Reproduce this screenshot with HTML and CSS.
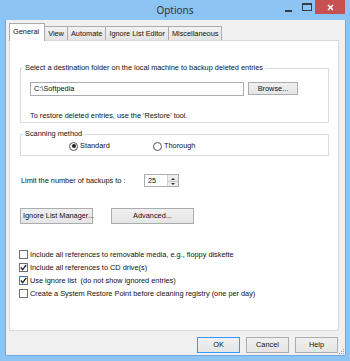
FILE: index.html
```html
<!DOCTYPE html>
<html lang="en">
<head>
  <meta charset="UTF-8" />
  <title>Options</title>
  <link rel="stylesheet" href="styles.css">
</head>
<body>

  <div class="window">
    <div class="titlebar">
      <span class="title">Options</span>
      <div class="controls">
        <span class="ctl-min"></span>
        <span class="ctl-max"></span>
        <span class="ctl-close">
          <svg width="7" height="7" viewBox="0 0 7 7"><path d="M1 1 L6 6 M6 1 L1 6" stroke="#fff" stroke-width="1.5"/></svg>
        </span>
      </div>
    </div>

    <div class="client">
      <div class="tabs">
        <div class="tab active">General</div>
        <div class="tab">View</div>
        <div class="tab">Automate</div>
        <div class="tab">Ignore List Editor</div>
        <div class="tab">Miscellaneous</div>
      </div>

      <div class="panel">
        <fieldset class="group group-folder">
          <legend>Select a destination folder on the local machine to backup deleted entries</legend>
          <div class="folder-row">
            <div class="textbox">C:\Softpedia</div>
            <div class="btn btn-browse">Browse...</div>
          </div>
          <p class="note">To restore deleted entries, use the 'Restore' tool.</p>
        </fieldset>

        <fieldset class="group group-scan">
          <legend>Scanning method</legend>
          <div class="radio-row">
            <label class="radio"><span class="dot checked"></span>Standard</label>
            <label class="radio"><span class="dot"></span>Thorough</label>
          </div>
        </fieldset>

        <div class="limit-row">
          <span class="limit-label">Limit the number of backups to :</span>
          <div class="spinner">
            <span class="spin-value">25</span>
            <span class="spin-arrows">
              <svg width="10" height="13" viewBox="0 0 10 13">
                <path d="M3 5 L5 3 L7 5 Z M3 8 L5 10 L7 8 Z" fill="#333"/>
                <line x1="0" y1="6.5" x2="10" y2="6.5" stroke="#c8c8c8"/>
              </svg>
            </span>
          </div>
        </div>

        <div class="action-row">
          <div class="btn btn-manager">Ignore List Manager...</div>
          <div class="btn btn-advanced">Advanced...</div>
        </div>

        <ul class="checks">
          <li><span class="box"></span>Include all references to removable media, e.g., floppy diskette</li>
          <li><span class="box checked"><svg width="9" height="9" viewBox="0 0 9 9"><path d="M1.8 4.4 L3.6 6.6 L7.2 2" fill="none" stroke="#222" stroke-width="1.3"/></svg></span>Include all references to CD drive(s)</li>
          <li><span class="box checked focus"><svg width="9" height="9" viewBox="0 0 9 9"><path d="M1.8 4.4 L3.6 6.6 L7.2 2" fill="none" stroke="#222" stroke-width="1.3"/></svg></span>Use ignore list&nbsp; (do not show ignored entries)</li>
          <li><span class="box"></span>Create a System Restore Point before cleaning registry (one per day)</li>
        </ul>
      </div>

      <div class="footer">
        <div class="btn btn-ok">OK</div>
        <div class="btn">Cancel</div>
        <div class="btn">Help</div>
        <svg class="grip" width="6" height="6" viewBox="0 0 6 6">
          <rect x="4" y="0" width="1" height="1" fill="#a0a0a0"/>
          <rect x="2" y="2" width="1" height="1" fill="#a0a0a0"/>
          <rect x="4" y="2" width="1" height="1" fill="#a0a0a0"/>
          <rect x="0" y="4" width="1" height="1" fill="#a0a0a0"/>
          <rect x="2" y="4" width="1" height="1" fill="#a0a0a0"/>
          <rect x="4" y="4" width="1" height="1" fill="#a0a0a0"/>
        </svg>
      </div>
    </div>
  </div>

</body>
</html>
```

FILE: styles.css
```css
body {
  margin: 0;
  padding: 0;
  font-family: 'Liberation Sans', Arial, sans-serif;
  font-size: 7.35px;
  line-height: 10px;
  color: #111;
  background: #8cc4f4;
}

.window {
  width: 350px;
  height: 361px;
  background: #8cc4f4;
}

/* title bar */
.titlebar {
  height: 20px;
  display: grid;
  grid-template-columns: 1fr auto 1fr;
  align-items: center;
}

.title {
  grid-column: 2;
  font-family: 'Noto Sans', 'Open Sans', sans-serif;
  font-size: 10px;
  color: #333;
}

.controls {
  grid-column: 3;
  justify-self: end;
  align-self: start;
  display: flex;
  align-items: flex-start;
  padding-right: 5px;
}

.ctl-min {
  width: 7px;
  height: 2px;
  margin-top: 10px;
  background: #3a3a3a;
}

.ctl-max {
  width: 10px;
  height: 8px;
  margin: 3px 0 0 10px;
  box-sizing: border-box;
  border: 1px solid #3a3a3a;
  border-top-width: 2px;
}

.ctl-close {
  width: 30px;
  height: 14px;
  margin-left: 3px;
  background: #c75050;
  display: flex;
  align-items: center;
  justify-content: center;
}

/* client area */
.client {
  margin: 0 5px 0 6px;
  height: 335px;
  background: #f0f0f0;
  box-shadow: -1px 0 0 #6fa9e0, 1px 0 0 #6fa9e0, 0 1px 0 #6fa9e0;
}

.tabs {
  display: flex;
  align-items: flex-end;
  padding: 3px 0 0 3px;
  height: 17px;
}

.tab {
  height: 14px;
  padding: 0 3px;
  box-sizing: border-box;
  border: 1px solid #acacac;
  border-bottom: none;
  margin-left: -1px;
  background: linear-gradient(#f2f2f2, #e3e3e3);
  line-height: 13px;
  white-space: nowrap;
}

.tab.active {
  height: 18px;
  margin: 0 0 -1px 0;
  padding: 1px 5px 0 3px;
  background: #fff;
  position: relative;
}

.panel {
  margin-left: 3px;
  width: 330px;
  height: 291px;
  box-sizing: border-box;
  border: 1px solid #d9d9d9;
  background: #fff;
  padding-top: 22px;
}

/* group boxes */
.group {
  margin: 0 0 0 10px;
  width: 309px;
  box-sizing: border-box;
  border: 1px solid #dcdcdc;
  padding: 0;
}

.group legend {
  margin-left: 2px;
  padding: 0 2px;
  line-height: 10px;
}

.group-folder {
  padding-bottom: 1px;
}

.folder-row {
  display: flex;
  align-items: flex-start;
  margin: 9px 0 0 9px;
}

.textbox {
  width: 214px;
  height: 14px;
  box-sizing: border-box;
  border: 1px solid #abadb3;
  background: #fff;
  padding-left: 3px;
  line-height: 12px;
}

.btn {
  box-sizing: border-box;
  border: 1px solid #acacac;
  background: linear-gradient(#f0f0f0, #e5e5e5);
  text-align: center;
  height: 16px;
  line-height: 14px;
  white-space: nowrap;
}

.btn-browse {
  width: 50px;
  height: 13px;
  line-height: 11px;
  margin-left: 4px;
}

.note {
  margin: 15px 0 0 9px;
}

.group-scan {
  margin-top: 6px;
  padding-bottom: 4px;
}

.radio-row {
  display: flex;
  margin: 2px 0 0 48px;
}

.radio {
  display: flex;
  align-items: center;
  width: 84px;
}

.dot {
  width: 9px;
  height: 9px;
  box-sizing: border-box;
  border: 1px solid #555;
  border-radius: 50%;
  margin-right: 2px;
  display: flex;
  align-items: center;
  justify-content: center;
}

.dot.checked::after {
  content: "";
  width: 4px;
  height: 4px;
  border-radius: 50%;
  background: #222;
}

/* limit */
.limit-row {
  display: flex;
  align-items: center;
  margin: 18px 0 0 11px;
}

.limit-label {
  width: 123px;
}

.spinner {
  display: flex;
  width: 35px;
  height: 13px;
  box-sizing: border-box;
  border: 1px solid #abadb3;
}

.spin-value {
  flex: 1;
  padding-left: 3px;
  line-height: 11px;
}

.spin-arrows {
  width: 10px;
  background: #ececec;
  border-left: 1px solid #d0d0d0;
  display: flex;
}

.action-row {
  display: flex;
  gap: 18px;
  margin: 21px 0 0 10px;
}

.btn-manager {
  width: 73px;
  text-align: left;
  padding-left: 2px;
}

.btn-advanced {
  width: 83px;
}

/* check list */
.checks {
  list-style: none;
  margin: 24px 0 0 9px;
  padding: 0;
}

.checks li {
  display: flex;
  align-items: center;
  height: 13px;
}

.box {
  width: 9px;
  height: 9px;
  box-sizing: border-box;
  border: 1px solid #707070;
  background: #fff;
  margin-right: 2px;
  display: flex;
}

.box svg {
  margin: -1px;
}

.box.focus {
  border-color: #3c7fb1;
}

/* footer buttons */
.footer {
  display: flex;
  justify-content: flex-end;
  align-items: flex-start;
  gap: 6px;
  margin-top: 6px;
  height: 18px;
}

.footer .btn {
  width: 43px;
}

.btn-ok {
  border-color: #3399ff;
}

.grip {
  align-self: flex-end;
  margin-left: -5px;
}
```
